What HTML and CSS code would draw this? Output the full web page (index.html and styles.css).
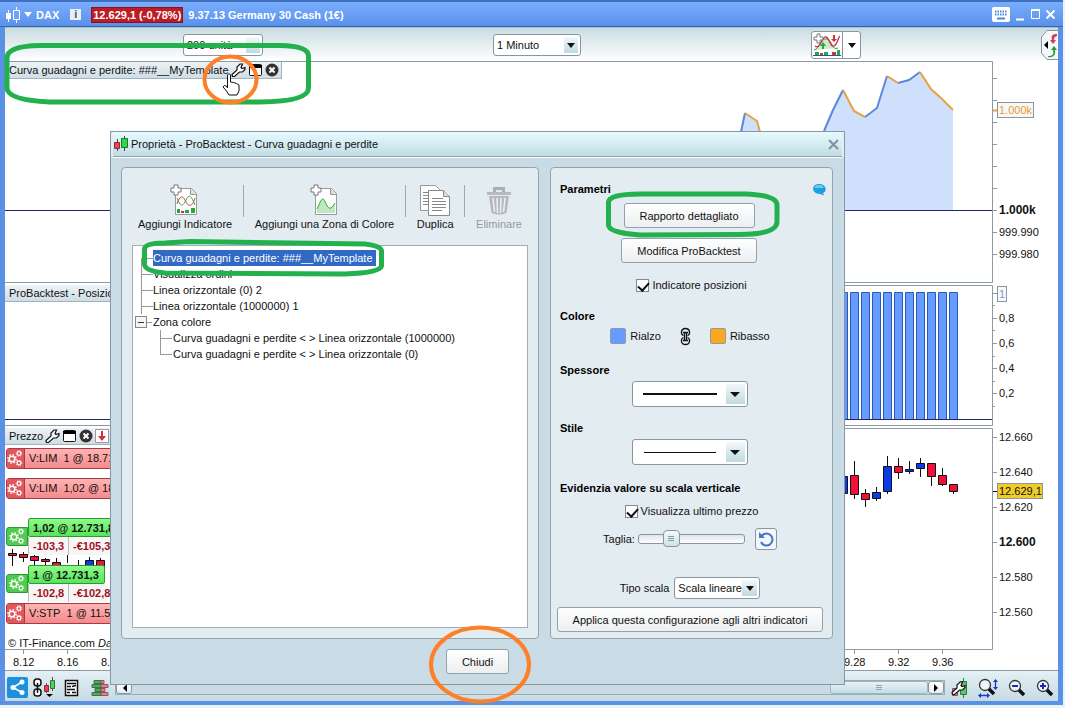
FILE: index.html
```
<!DOCTYPE html>
<html lang="it">
  <head>
    <title>DAX - Germany 30 Cash</title>
    <meta charset="utf-8">
    <link rel="stylesheet" href="styles.css">
  </head>
  <body>
    <svg class="defs" width="0" height="0">
      <defs>
        <g id="i-wrench"><path d="M1.500 13.500L1 11.500 6 7V4l3-3h2.500L10 4.500 11 5.500l3-1V6.500L11.500 9h-3l-5 4.500z" fill="#fff" stroke="#111" stroke-width="1.200"/></g>
        <g id="i-window"><rect x="1.500" y="1.500" width="12" height="11" rx="1" fill="#fff" stroke="#111"/><path d="M1 2h13v3H1z"/></g>
        <g id="i-close"><circle cx="7" cy="7" r="6.500" fill="#333"/><path d="M4.500 4.500l5 5M9.500 4.500l-5 5" stroke="#fff" stroke-width="2"/></g>
        <g id="i-gears" fill="none" stroke="#fff">
          <circle cx="5" cy="9" r="2.800" stroke-width="1.500"/><circle cx="5" cy="9" r="4.200" stroke-width="1.500" stroke-dasharray="1.500 1.800"/>
          <circle cx="12" cy="3.500" r="1.800" stroke-width="1.200"/><circle cx="12" cy="3.500" r="2.800" stroke-dasharray="1 1.200"/>
          <circle cx="12" cy="13" r="1.800" stroke-width="1.200"/><circle cx="12" cy="13" r="2.800" stroke-dasharray="1 1.200"/>
        </g>
        <g id="i-lens"><path d="M10 10l6 6" stroke="#111" stroke-width="3.500"/><circle cx="7" cy="7" r="5.500" fill="#eef4f8" stroke="#333" stroke-width="1.300"/></g>
      </defs>
    </svg>

    <main class="app">
      <header class="titlebar">
        <svg class="logo" width="16" height="18"><path d="M3.500 4v12M11.500 1v16" stroke="#fff"/><path d="M1 7h5v6H1z" fill="#fff"/><path d="M8.500 4.500h6v9h-6z" fill="#6ea3f8" stroke="#fff"/></svg>
        <svg width="8" height="5"><path d="M0 0h8L4 5z" fill="#fff"/></svg>
        <h1>DAX</h1>
        <span class="info">i</span>
        <span class="quote">12.629,1 (-0,78%)</span>
        <span class="instrument">9.37.13 Germany 30 Cash (1€)</span>
        <div class="window-buttons">
          <button aria-label="Tastiera"><svg width="18" height="15"><rect width="18" height="15" rx="2" fill="#fff"/><path d="M3 4.500h12M3 7.500h12" stroke="#4d83dc" stroke-width="2" stroke-dasharray="1.500 1"/><path d="M5 11.500h8" stroke="#4d83dc" stroke-width="2"/></svg></button>
          <button aria-label="Riduci"><svg width="9" height="12"><path d="M0 10.500h8" stroke="#fff" stroke-width="2"/></svg></button>
          <button aria-label="Ingrandisci"><svg width="9" height="12"><path d="M.5 1.500h8v8h-8z" fill="none" stroke="#fff"/><path d="M0 1h9" stroke="#fff" stroke-width="2"/></svg></button>
          <button aria-label="Chiudi finestra"><svg width="9" height="12"><path d="M.5 1.500l8 8M8.500 1.500l-8 8" stroke="#fff" stroke-width="2"/></svg></button>
        </div>
      </header>

      <div class="toolbar">
        <span class="combo units"><select aria-label="Unità"><option>200 unità</option></select></span>
        <span class="combo period"><select aria-label="Periodo"><option>1 Minuto</option></select></span>
        <button class="add-indicator" aria-label="Aggiungi indicatore">
          <svg width="30" height="25">
            <path d="M2 18C8 17 9 5 15 7s5 12 11 9" fill="#cfe8cf" stroke="#3a9a4a"/>
            <path d="M3 14c5 4 7-10 11-9s4 11 8 9 4-9 6-10" fill="none" stroke="#d03048" stroke-width="1.300"/>
            <path d="M5 2h3v3h3v3H8v3H5V8H2V5h3z" fill="#fff" stroke="#777"/>
            <path d="M10 17v-3H8l3-4 3 4h-2v3z" fill="#28a838"/>
            <path d="M21 3h2v4h2l-3 3-3-3h2z" fill="#d03048"/>
            <path d="M3 20h4v3H3zM12 20h4v3h-4zM25 18h3v5h-3z" fill="#28a838"/><path d="M8 21h3v2H8zM20 20h4v3h-4z" fill="#d03048"/>
            <path d="M1 23.500h28" stroke="#1c5c90"/>
          </svg>
          <span class="arrow"></span>
        </button>
        <button class="side-tab" aria-label="Ordini">
          <svg width="17" height="30"><path d="M17 .5H6L.5 7v16L6 29.500h11" fill="#f4f8f9" stroke="#8796a2"/><path d="M7 11v8l-4-4z"/><path d="M16 4c-5 0-6 2-5 6H9l3 4 3-4h-2c0-2 0-3 3-4z" fill="#d93a4e"/><path d="M7 26c5 0 6-2 5-6h-2l3-4 3 4h-2c1 5-2 8-7 7z" fill="#2b9a3c"/></svg>
        </button>
      </div>

      <section class="panel equity">
        <svg class="plot" viewBox="5 61 1053 223" preserveAspectRatio="xMaxYMin slice">
          <path class="frame" d="M5 61.500H992.500V282.500H5"/>
          <path class="area" d="M741 210V132L745 113 757 121 760 132V210ZM824 210V131L833 110 843 90 854 111 865 117 877 108 887 76 898 83 909 80 920 72 931 89 942 99 953 110V210Z"/>
          <path class="up" d="M741 132L745 113M824 131L833 110 843 90M865 117L877 108 887 76M898 83L909 80 920 72"/>
          <path class="down" d="M745 113L757 121 760 132M843 90L854 111 865 117M887 76L898 83M920 72L931 89 942 99 953 110"/>
          <path class="base" d="M5 210.500H992"/>
          <path class="frame" d="M993 78.500h4M993 100.500h4M993 122.500h4M993 144.500h4M993 166.500h4M993 188.500h4M993 210.500h4M993 232.500h4M993 254.500h4"/>
          <path class="down" d="M993 110.500h4"/>
          <rect class="tag" x="997.500" y="102.500" width="36" height="15"/>
          <text class="tag-orange" x="999" y="114">1.000k</text>
          <text class="major" x="999" y="214">1.000k</text>
          <text x="999" y="236">999.990</text>
          <text x="999" y="258">999.980</text>
        </svg>
        <div class="panel-title">
          Curva guadagni e perdite: ###__MyTemplate
          <svg width="15" height="15"><use href="#i-wrench"/></svg>
          <svg width="15" height="14"><use href="#i-window"/></svg>
          <svg width="14" height="14"><use href="#i-close"/></svg>
        </div>
      </section>

      <section class="panel positions">
        <svg class="plot" viewBox="5 284 1053 143" preserveAspectRatio="xMaxYMin slice">
          <path class="frame" d="M5 285.500H992.500V425.500H5"/>
          <path class="bars" d="M839.500 292.500h8v127h-8zM850.500 292.500h8v127h-8zM861.500 292.500h8v127h-8zM872.500 292.500h8v127h-8zM883.500 292.500h8v127h-8zM894.500 292.500h8v127h-8zM905.500 292.500h8v127h-8zM916.500 292.500h8v127h-8zM927.500 292.500h8v127h-8zM938.500 292.500h8v127h-8zM949.500 292.500h8v127h-8z"/>
          <path class="base" d="M5 419.500H992"/>
          <path class="frame" d="M993 293.500h4M993 305.500h2M993 318.500h4M993 330.500h2M993 343.500h4M993 356.500h2M993 368.500h4M993 381.500h2M993 393.500h4M993 406.500h2"/>
          <rect class="tag" x="997.500" y="286.500" width="9" height="15"/>
          <text class="tag-blue" x="999" y="298">1</text>
          <text x="999" y="322">0,8</text>
          <text x="999" y="347">0,6</text>
          <text x="999" y="372">0,4</text>
          <text x="999" y="397">0,2</text>
        </svg>
        <div class="panel-title">ProBacktest - Posizioni</div>
      </section>

      <section class="panel price">
        <svg class="plot" viewBox="5 427 1053 244" preserveAspectRatio="xMaxYMin slice">
          <path class="frame" d="M5 428.500H992.500V649.500H5M5 670.500H1058"/>
          <path class="wick" d="M854.500 461v38M865.500 489v18M876.500 487v14M887.500 456v38M898.500 458v21M909.500 461v13M920.500 458v19M931.500 463v23M942.500 468v18M953.500 484v10"/>
          <path class="rise" d="M839.500 476.500h8v17h-8zM872.500 492.500h8v6h-8zM883.500 466.500h8v25h-8zM905.500 469.500h8v2h-8zM916.500 463.500h8v5h-8z"/>
          <path class="fall" d="M850.500 475.500h8v19h-8zM861.500 493.500h8v6h-8zM894.500 466.500h8v6h-8zM927.500 463.500h8v13h-8zM938.500 475.500h8v9h-8zM949.500 484.500h8v7h-8z"/>
          <path class="wick" d="M12.500 549v17M23.500 552v10M34.500 552v16M45.500 558v10M56.500 558v12M67.500 555v8M78.500 560v8M89.500 557v10M100.500 558v10"/>
          <path class="fall" d="M8.500 553.500h8v2h-8zM19.500 554.500h8v3h-8zM30.500 556.500h8v4h-8zM41.500 559.500h8v2h-8zM52.500 562.500h8v4h-8zM96.500 560.500h8v6h-8z"/>
          <path class="rise" d="M85.500 560.500h8v6h-8z"/>
          <path class="frame" d="M993 437.500h4M993 472.500h4M993 507.500h4M993 542.500h4M993 577.500h4M993 612.500h4M23.500 650v4M67.500 650v4M854.500 650v4M898.500 650v4M942.500 650v4"/>
          <path class="wick" d="M993 491.500h4"/>
          <rect class="last" x="997.500" y="483.500" width="45" height="15"/>
          <text x="999" y="441">12.660</text>
          <text x="999" y="476">12.640</text>
          <text x="999" y="495">12.629,1</text>
          <text x="999" y="511">12.620</text>
          <text class="major" x="999" y="546">12.600</text>
          <text x="999" y="581">12.580</text>
          <text x="999" y="616">12.560</text>
          <text x="8" y="647">© IT-Finance.com <tspan class="italic">Dati</tspan></text>
          <text x="13" y="666">8.12</text>
          <text x="57" y="666">8.16</text>
          <text x="101" y="666">8.20</text>
          <text x="844" y="666">9.28</text>
          <text x="888" y="666">9.32</text>
          <text x="932" y="666">9.36</text>
        </svg>
        <div class="panel-title">
          Prezzo
          <svg width="15" height="15"><use href="#i-wrench"/></svg>
          <svg width="15" height="14"><use href="#i-window"/></svg>
          <svg width="14" height="14"><use href="#i-close"/></svg>
          <svg width="14" height="14"><path d="M.5.5h13v13H.5z" fill="#fff" stroke="#99a"/><path d="M6 2h2v5h3l-4 5-4-5h3z" fill="#d92b3d"/></svg>
        </div>
        <div class="order sell lim-1"><svg width="16" height="17"><use href="#i-gears"/></svg><span>V:LIM&nbsp; 1 @ 18.711</span></div>
        <div class="order sell lim-2"><svg width="16" height="17"><use href="#i-gears"/></svg><span>V:LIM&nbsp; 1,02 @ 18.7</span></div>
        <div class="trade trade-1">
          <div class="gear"><svg width="16" height="17"><use href="#i-gears"/></svg></div>
          <div><div class="size">1,02 @ 12.731,8</div><div class="result"><span>-103,3</span><span>-€105,3</span></div></div>
        </div>
        <div class="trade trade-2">
          <div class="gear"><svg width="16" height="17"><use href="#i-gears"/></svg></div>
          <div><div class="size">1 @ 12.731,3</div><div class="result"><span>-102,8</span><span>-€102,8</span></div></div>
        </div>
        <div class="order sell stp"><svg width="16" height="17"><use href="#i-gears"/></svg><span>V:STP&nbsp; 1 @ 11.531</span></div>
      </section>

      <footer class="statusbar">
        <button class="share" aria-label="Condividi"><svg width="21" height="21"><path d="M15 5L6 10.500l9 5" fill="none" stroke="#fff" stroke-width="1.500"/><circle cx="15" cy="5" r="2.500" fill="#fff"/><circle cx="6" cy="10.500" r="2.500" fill="#fff"/><circle cx="15" cy="15.500" r="2.500" fill="#fff"/></svg></button>
        <button aria-label="Collega"><svg width="25" height="22"><g fill="#fff" stroke="#111" stroke-width="1.500"><rect x="1" y="2" width="7" height="7" rx="3"/><rect x="1" y="12" width="7" height="7" rx="3"/><path d="M4.500 6v10"/></g><path d="M13.500 6v10M19.500 0v14" stroke="#555"/><path d="M11.500 8.500h4v6h-4z" fill="#e0415a" stroke="#a02030"/><path d="M17.500 3.500h4v8h-4z" fill="#4fcf5c" stroke="#208030"/><path d="M13 17h7l-3.500 3z"/></svg></button>
        <button aria-label="Rapporto"><svg width="22" height="18"><path d="M2.500 1.500h12v15h-12z" fill="#fff" stroke="#111" stroke-width="1.500"/><path d="M4 4.500h9M4 7.500h4M9 7.500l4-1M4 10.500h8M4 13.500h3M9 13.500h4" stroke="#111" stroke-width="1.500"/></svg></button>
        <button aria-label="Book"><svg width="20" height="18"><path d="M4 1.500h7v3H4zM2 5.500h9v3H2zM5 9.500h6v3H5zM2 13.500h9v3H2z" fill="#3fb550" stroke="#4a6a50"/><path d="M11 1.500h3v3h-3zM11 5.500h7v3h-7zM11 9.500h4v3h-4zM11 13.500h7v3h-7z" fill="#e88088" stroke="#8a5a5c"/></svg></button>
        <div class="scrollbar">
          <button class="scroll-arrow" aria-label="Sinistra"><svg width="5" height="8"><path d="M5 0v8L1 4z"/></svg></button>
          <div class="scroll-track"><div class="scroll-thumb"><svg width="6" height="6"><path d="M0 .5h6M0 2.500h6M0 4.500h6" stroke="#90a5b5"/></svg></div></div>
          <button class="scroll-arrow" aria-label="Destra"><svg width="5" height="8"><path d="M0 0v8l4-4z"/></svg></button>
        </div>
        <div class="tools">
          <button aria-label="Impostazioni"><svg width="17" height="20"><path d="M12.500 0v20" stroke="#2b7a35"/><path d="M9.500 3.500h6v13h-6z" fill="#5cc766" stroke="#2b7a35"/><path d="M1.500 10.500h5v7h-5z" fill="#c98a88" stroke="#855"/><use href="#i-wrench" y="3"/></svg></button>
          <button aria-label="Adatta"><svg width="20" height="20"><use href="#i-lens"/><path d="M17.500 3v7M2 17.500h8" stroke="#1a34d0" stroke-width="1.300"/><path d="M15 4h5l-2.500-3zM15 9h5l-2.500 3zM3 15v5l-3-2.500zM9 15v5l3-2.500z" fill="#1a34d0"/></svg></button>
          <button aria-label="Riduci zoom"><svg width="18" height="18"><use href="#i-lens"/><path d="M4 7h6" stroke="#1a2ac0" stroke-width="2"/></svg></button>
          <button aria-label="Aumenta zoom"><svg width="18" height="18"><use href="#i-lens"/><path d="M4 7h6M7 4v6" stroke="#1a2ac0" stroke-width="2"/></svg></button>
        </div>
      </footer>
    </main>

    <div class="dialog" role="dialog" aria-labelledby="dialog-title">
      <header class="dialog-head">
        <svg width="16" height="16"><path d="M4.500 3v12M11.500 0v15" stroke="#444"/><path d="M1.500 6.500h5v6h-5z" fill="#e0485c" stroke="#a02436"/><path d="M8.500 2.500h6v9h-6z" fill="#35d44a" stroke="#1c7a28"/></svg>
        <h2 id="dialog-title">Proprietà - ProBacktest - Curva guadagni e perdite</h2>
        <button class="dialog-close" aria-label="Chiudi finestra"><svg width="11" height="11"><path d="M1 1l9 9M10 1l-9 9" stroke="#80929d" stroke-width="2"/></svg></button>
      </header>

      <div class="dialog-body">
        <section class="box elements">
          <div class="actions">
            <button>
              <svg width="32" height="32">
                <path d="M6.500 4.500h16l5 5v21h-21z" fill="#fff" stroke="#999"/><path d="M21.500 4.500v6h6" fill="#ddd" stroke="#999"/>
                <path d="M8 20c4-12 7-6 9-2s6 6 9-4" fill="none" stroke="#d03048"/><path d="M8 14c4 10 6 8 9 2s5-5 9 5" fill="none" stroke="#28a838"/>
                <path d="M8 25h3v4H8zM16 26h4v3h-4zM22 24h4v5h-4z" fill="#28a838"/><path d="M12 27h3v2h-3z" fill="#d03048"/>
                <path d="M5 1h4v3h3v4H9v3H5V8H2V4h3z" fill="#fff" stroke="#777"/>
              </svg>
              Aggiungi Indicatore
            </button>
            <hr>
            <button>
              <svg width="32" height="32">
                <path d="M6.500 4.500h16l5 5v21h-21z" fill="#fff" stroke="#999"/><path d="M21.500 4.500v6h6" fill="#ddd" stroke="#999"/>
                <path d="M8 25c3-6 4-10 6-10s4 11 8 9c2-1 3-4 4-5v10H8z" fill="#bfe8bf"/><path d="M8 25c3-6 4-10 6-10s4 11 8 9c2-1 3-4 4-5" fill="none" stroke="#28a838"/>
                <path d="M5 1h4v3h3v4H9v3H5V8H2V4h3z" fill="#fff" stroke="#777"/>
              </svg>
              Aggiungi una Zona di Colore
            </button>
            <hr>
            <button>
              <svg width="32" height="32">
                <path d="M1.500 1.500h15l4 4v21h-19z" fill="#fff" stroke="#999"/><path d="M4 8.500h6M4 11.500h6M4 14.500h6M4 17.500h6M4 20.500h6" stroke="#888"/>
                <path d="M9.500 6.500h15l6 6v19h-21z" fill="#fff" stroke="#888"/><path d="M24.500 6.500v6h6" fill="#ddd" stroke="#888"/>
                <path d="M13 14.500h11M13 17.500h14M13 20.500h14M13 23.500h14M13 26.500h10" stroke="#888"/>
              </svg>
              Duplica
            </button>
            <hr>
            <button disabled>
              <svg width="32" height="32">
                <path d="M11.500 8V4.500h9V8" fill="none" stroke="#a9b0b4" stroke-width="3"/><path d="M4 8h24v3H4z" fill="#b5babd"/>
                <path d="M6 12h20l-2.500 17q-7.500 3-15 0z" fill="#b4babe"/><path d="M10 14l1.500 14M14 14l.5 15M18 14l-.5 15M22 14l-1.500 14" stroke="#eef1f2" stroke-width="1.500"/>
              </svg>
              Eliminare
            </button>
          </div>

          <ul class="tree">
            <li><span class="selected">Curva guadagni e perdite: ###__MyTemplate</span></li>
            <li>Visualizza ordini</li>
            <li>Linea orizzontale (0) 2</li>
            <li>Linea orizzontale (1000000) 1</li>
            <li class="folder"><button class="toggle" aria-label="Comprimi"></button>Zona colore</li>
            <li class="child">Curva guadagni e perdite &lt; &gt; Linea orizzontale (1000000)</li>
            <li class="child">Curva guadagni e perdite &lt; &gt; Linea orizzontale (0)</li>
          </ul>
        </section>

        <section class="box settings">
          <div class="heading-row">
            <h3>Parametri</h3>
            <svg width="14" height="13"><path d="M7 1c8 0 8 8 4 9l1 2.500L8 11C-1 11-1 1 7 1z" fill="#1c9fe0"/><path d="M7 2c4 0 5 2 4 3H3c-1-1 0-3 4-3z" fill="#6cc8f2"/></svg>
          </div>
          <button class="btn report">Rapporto dettagliato</button>
          <button class="btn modify">Modifica ProBacktest</button>
          <label class="check"><input type="checkbox" checked>Indicatore posizioni</label>

          <h3>Colore</h3>
          <div class="colors">
            <button class="color"><span class="swatch blue"></span>Rialzo</button>
            <svg width="11" height="19"><g fill="none" stroke="#111" stroke-width="1.300"><path d="M3.500 8.500c-3-1-3-7 2-7s5 6 2 7M3.500 10.500c-3 1-3 7 2 7s5-6 2-7"/><path d="M3 5.500h5M3 13.500h5M4.500 5.500v8M6.500 5.500v8"/></g></svg>
            <button class="color"><span class="swatch orange"></span>Ribasso</button>
          </div>

          <h3>Spessore</h3>
          <span class="combo line thick"><select aria-label="Spessore"><option label=" "></option></select></span>

          <h3 class="style-title">Stile</h3>
          <span class="combo line"><select aria-label="Stile"><option label=" "></option></select></span>

          <h3>Evidenzia valore su scala verticale</h3>
          <label class="check last-price"><input type="checkbox" checked>Visualizza ultimo prezzo</label>
          <div class="size-row">
            <label for="size">Taglia:</label>
            <input id="size" type="range" min="0" max="100" value="27">
            <button class="reset" aria-label="Ripristina"><svg width="16" height="16"><path d="M4 4.500A6 6 0 1 1 3 11" fill="none" stroke="#4476c8" stroke-width="2"/><path d="M1 1v6h6z" fill="#4476c8"/></svg></button>
          </div>
          <div class="scale-row">
            <label for="scale">Tipo scala</label>
            <span class="combo scale"><select id="scale"><option>Scala lineare</option></select></span>
          </div>
          <button class="btn apply">Applica questa configurazione agli altri indicatori</button>
        </section>
      </div>
      <button class="btn close">Chiudi</button>
    </div>

    <svg class="marks" width="1065" height="708">
      <g fill="none" stroke="#22b14c" stroke-width="5">
        <path d="M40 45.500H280Q308.500 46 308.500 56V88Q308.500 101.500 260 102H50Q7 100 7 88V58Q7 46 40 45.500Z"/>
        <path d="M165 243L190 241.500 365 244Q381.500 246 381.500 251V266Q380 273 345 274L165 273Q144.500 271 144.500 264V249Q145 243 165 243Z"/>
        <path d="M640 194H745Q777 195 777 205V222Q777 234 740 234.500L640 235Q608.500 233 608.500 225V202Q609 194 640 194Z"/>
      </g>
      <g fill="none" stroke="#ff7f27" stroke-width="4">
        <ellipse cx="230.500" cy="79.500" rx="26" ry="23"/>
        <ellipse cx="480" cy="664.500" rx="49" ry="37"/>
      </g>
      <path d="M227.500 88V75q1.500-3 3 0v7l3 .5 3 1 2.500 1.500v6l-2 4h-8l-2.500-4-3.500-4q1-3 4-.5z" fill="#fff" stroke="#111"/>
    </svg>
  </body>
</html>
```

FILE: styles.css
```
:root {
  --line: #8796a2;
  --blue: #5b91e4;
  --text: #111;
}
* {
  box-sizing: border-box;
}
html, body {
  margin: 0;
  height: 100%;
  font: 11px/16px "Liberation Sans", Arial, sans-serif;
  color: var(--text);
  background: #e8f3fb;
}
body {
  position: relative;
  overflow: hidden;
}
button, select {
  font: inherit;
  color: inherit;
}
button {
  border: 0;
  padding: 0;
  background: none;
}
svg {
  display: block;
  flex: none;
}
.defs {
  position: absolute;
}
h1, h2, h3 {
  margin: 0;
  font-size: 11px;
}

/* main window */
.app {
  display: flex;
  flex-direction: column;
  height: calc(100% - 3px);
  margin-right: 2px;
  border: solid var(--blue);
  border-width: 0 5px 4px;
  box-shadow: inset 0 -1px #3e68b0;
  background: #fff;
}
.titlebar {
  display: flex;
  align-items: center;
  flex: none;
  height: 27px;
  margin: 0 -5px;
  padding: 1px 8px 0 5px;
  border-top: 2px solid #3f70c0;
  border-bottom: 1px solid #3762ac;
  background: linear-gradient(#79adfd, #5a91ea);
  color: #fff;
  font-weight: bold;
}
.logo {
  margin-right: 3px;
}
.titlebar h1 {
  margin: 0 11px 0 4px;
}
.info {
  width: 11px;
  height: 11px;
  margin-right: 10px;
  background: #e8eefa;
  color: #555;
  line-height: 11px;
  text-align: center;
}
.quote {
  padding: 0 1px;
  margin-right: 5px;
  border: 1px solid #8c1020;
  background: #bd1c24;
  line-height: 14px;
}
.window-buttons {
  display: flex;
  align-items: center;
  gap: 6px;
  margin-left: auto;
}
.toolbar {
  display: flex;
  align-items: center;
  flex: none;
  height: 34px;
  border-top: 1px solid #a8c0c8;
  background: linear-gradient(#c9dce1, #fff);
}
.combo {
  position: relative;
  display: inline-block;
  height: 22px;
}
.combo select {
  width: 100%;
  height: 100%;
  padding: 0 3px;
  border: 1px solid var(--line);
  border-radius: 3px;
  background: #fff;
  appearance: none;
}
.combo::before {
  content: "";
  position: absolute;
  top: 3px;
  right: 3px;
  bottom: 3px;
  width: 14px;
  background: linear-gradient(#f2f8f9, #bfd9e0);
}
.combo::after, .arrow::after {
  content: "";
  position: absolute;
  top: 50%;
  right: 6px;
  margin-top: -2px;
  border: solid transparent;
  border-width: 5px 4px 0;
  border-top-color: #111;
}
.arrow::after {
  right: 4px;
}
.units {
  width: 80px;
  margin-left: 178px;
}
.units::after {
  display: none;
}
.period {
  width: 88px;
  margin-left: 230px;
}
.add-indicator {
  display: flex;
  width: 50px;
  height: 28px;
  margin-left: 230px;
  border: 1px solid var(--line);
  border-radius: 3px;
  background: #fff;
}
.arrow {
  position: relative;
  align-self: stretch;
  flex: 1;
  border-left: 1px solid var(--line);
}
.side-tab {
  margin-left: auto;
}

/* charts */
.panel {
  position: relative;
  min-height: 0;
}
.equity {
  flex: 223 1 0;
}
.positions {
  flex: 143 1 0;
}
.price {
  flex: 244 1 0;
}
.plot {
  width: 100%;
  height: 100%;
  fill: none;
}
.plot text {
  fill: var(--text);
}
.plot .major {
  font-size: 12px;
  font-weight: bold;
}
.italic {
  font-style: italic;
}
.frame {
  stroke: #8d9aa3;
}
.area {
  fill: #cfe0fd;
}
.up {
  stroke: #5b87dd;
  stroke-width: 2;
}
.down {
  stroke: #e8a33d;
  stroke-width: 2;
}
.base {
  stroke: #24246e;
}
.bars {
  fill: #669cff;
  stroke: #2a58b8;
}
.tag {
  fill: #f7f7f5;
  stroke: var(--line);
}
.plot .tag-orange {
  fill: #ec9a35;
}
.plot .tag-blue {
  fill: #7c9ae0;
}
.last {
  fill: #f0cc28;
  stroke: var(--line);
}
.wick {
  stroke: #111;
}
.rise {
  fill: #0c3be8;
  stroke: #111;
}
.fall {
  fill: #f0103a;
  stroke: #111;
}
.panel-title {
  position: absolute;
  top: 1px;
  left: 0;
  display: flex;
  align-items: center;
  gap: 2px;
  height: 17px;
  padding: 0 2px 0 4px;
  border: 1px solid #a3b1bd;
  border-width: 0 1px 1px 0;
  background: linear-gradient(#edf3f6, #cfdde6);
  white-space: nowrap;
}

/* orders pinned on the price chart */
.order {
  position: absolute;
  left: 1px;
  display: flex;
  align-items: center;
  height: 21px;
  padding-right: 4px;
  border: 1px solid #a33c44;
  border-radius: 3px;
  background: linear-gradient(#ffb4b4, #f58a8c);
  white-space: nowrap;
}
.order span {
  padding-left: 4px;
  border-left: 1px solid #a33c44;
  line-height: 19px;
}
.order svg {
  width: 17px;
  height: 19px;
  padding: 1px 0;
  background: #e2565c;
}
.lim-1 {
  top: 21px;
}
.lim-2 {
  top: 51px;
}
.stp {
  top: 176px;
}
.trade {
  position: absolute;
  left: 1px;
  display: flex;
  font-weight: bold;
  white-space: nowrap;
}
.trade-1 {
  top: 91px;
}
.trade-2 {
  top: 138px;
}
.gear {
  width: 22px;
  height: 19px;
  margin-top: 9px;
  padding: 0 2px;
  border: 1px solid #2c9a30;
  border-radius: 3px 0 0 3px;
  background: #4fcb50;
}
.size {
  width: max-content;
  height: 19px;
  padding: 0 5px 0 4px;
  border: 1px solid #2c9a30;
  border-radius: 2px;
  background: linear-gradient(#8dfa88, #58e45a);
  line-height: 18px;
}
.result {
  display: flex;
  background: #f6f6f6;
  color: #a3101c;
  line-height: 18px;
}
.result span {
  width: 40px;
  padding-left: 4px;
  border-left: 1px solid #bbb;
}

/* bottom bar */
.statusbar {
  display: flex;
  align-items: center;
  flex: none;
  height: 30px;
  padding: 3px 4px 0 2px;
  background: linear-gradient(#e4f0f4, #c5dbe4);
}
.statusbar > button {
  margin-right: 5px;
}
.statusbar .share {
  border-radius: 2px;
  background: #1e8fdc;
}
.scrollbar {
  display: flex;
  flex: 1;
  height: 15px;
  border: 1px solid #9aabb7;
  background: #cbdbe4;
}
.scroll-arrow {
  display: flex;
  align-items: center;
  justify-content: center;
  width: 16px;
  border: 1px solid var(--line);
  border-radius: 3px;
  background: linear-gradient(#fff, #e6eff3);
}
.scroll-track {
  display: flex;
  flex: 1;
  justify-content: flex-end;
}
.scroll-thumb {
  display: flex;
  align-items: center;
  justify-content: center;
  width: 98px;
  border: 1px solid #a3b5c0;
  border-radius: 3px;
  background: linear-gradient(#e7f3f7, #c5dde6);
}
.tools {
  display: flex;
  align-items: center;
  gap: 10px;
  margin-left: 6px;
}

/* properties dialog */
.dialog {
  position: absolute;
  top: 131px;
  left: 110px;
  right: 220px;
  border: 1px solid var(--line);
  background: #c9dbe4;
}
.dialog-head {
  display: flex;
  align-items: center;
  gap: 2px;
  height: 25px;
  margin: 0 2px;
  border-bottom: 1px solid #8fa1ab;
  box-shadow: 0 1px #fff, 2px 0 #e0f0f4, -2px 0 #e0f0f4;
  background: linear-gradient(#e6fbff, #c2dce4);
}
.dialog-head h2 {
  font-weight: normal;
}
.dialog-close {
  margin: 0 3px 0 auto;
}
.dialog-body {
  display: flex;
  gap: 11px;
  padding: 10px 11px 10px 10px;
}
.box {
  border: 1px solid #93a4af;
  border-radius: 4px;
  background: #e3ecf1;
}
.elements {
  display: flex;
  flex: 1;
  flex-direction: column;
  padding: 16px 10px 10px;
}
.actions {
  display: flex;
  justify-content: space-between;
  margin-bottom: 13px;
  padding: 0 6px;
}
.actions button {
  display: flex;
  flex-direction: column;
  align-items: center;
}
.actions button:disabled {
  color: #999;
}
.actions hr {
  width: 1px;
  height: 32px;
  margin: 1px 0 0;
  border: 0;
  background: #9daab2;
}
.tree {
  flex: 1;
  margin: 0;
  padding: 4px 0 0 8px;
  border: 1px solid #a0adb6;
  background: #fff;
  list-style: none;
}
.tree li {
  display: flex;
  align-items: center;
  height: 16px;
}
.tree li::before {
  content: "";
  width: 12px;
  height: 16px;
  background: linear-gradient(#999, #999) 0 8px / 12px 1px no-repeat, linear-gradient(#999, #999) 0 0 / 1px 16px no-repeat;
}
.tree li:first-child::before {
  background-position: 0 8px, 0 8px;
}
.tree .folder {
  background: linear-gradient(#999, #999) 0 8px / 11px 1px no-repeat;
}
.tree .folder::before {
  display: none;
}
.tree .child {
  padding-left: 19px;
}
.tree .child::before {
  width: 13px;
}
.tree .child:last-child::before {
  background-size: 12px 1px, 1px 9px;
}
.toggle {
  width: 12px;
  height: 12px;
  margin-left: -6px;
  margin-right: 6px;
  border: 1px solid #888;
  background: linear-gradient(#333, #333) center / 6px 1px no-repeat, #f5f5f5;
}
.selected {
  padding-right: 3px;
  background: #316ac5;
  color: #fff;
}
.settings {
  display: flex;
  flex-direction: column;
  align-items: center;
  width: 283px;
  padding: 13px 6px 6px;
}
.settings h3 {
  align-self: stretch;
  margin: 15px 0 0 3px;
  color: #000;
}
.heading-row {
  display: flex;
  align-self: stretch;
  align-items: center;
  justify-content: space-between;
}
.settings .heading-row h3 {
  margin-top: 0;
}
.btn {
  height: 25px;
  border: 1px solid #93a1ab;
  border-radius: 3px;
  background: linear-gradient(#fff, #eceef0);
}
.report {
  width: 131px;
  margin: 6px 5px 0 0;
}
.modify {
  width: 136px;
  margin: 10px 5px 0 0;
}
.check {
  display: flex;
  align-items: center;
  gap: 3px;
  height: 16px;
  margin-top: 14px;
}
.last-price {
  margin-top: 7px;
}
.check input {
  width: 13px;
  height: 13px;
  margin: 0;
  border: 1px solid #7d8b95;
  background: #fff;
  appearance: none;
}
.check input:checked::after {
  content: "";
  display: block;
  width: 9px;
  height: 5px;
  margin: 2px 0 0 1px;
  border: solid #111;
  border-width: 0 0 2px 2px;
  transform: rotate(-48deg);
}
.colors {
  display: flex;
  align-items: center;
  gap: 19px;
  height: 22px;
  margin: 1px 3px 0 0;
}
.color {
  display: flex;
  align-items: center;
  gap: 4px;
}
.swatch {
  width: 16px;
  height: 16px;
  border: 1px solid #8d9ba8;
  border-radius: 2px;
}
.blue {
  background: #669cff;
}
.orange {
  background: #ffa620;
}
.line {
  width: 116px;
  height: 26px;
  margin: 3px 3px 0 0;
}
.line select {
  background: linear-gradient(#111, #111) 11px 12px / 72px 1px no-repeat, #fff;
}
.line.thick select {
  background-position: 10px 11px, 0 0;
  background-size: 74px 2px, auto;
}
.line::before {
  width: 19px;
}
.scale::before {
  width: 15px;
}
.line::after {
  right: 8px;
  border-width: 5px 5px 0;
}
.settings .style-title {
  margin-top: 13px;
}
.size-row {
  display: flex;
  align-items: center;
  height: 22px;
  margin: 9px 3px 0 0;
}
.size-row input {
  width: 107px;
  height: 17px;
  margin: 0 10px 0 3px;
  background: none;
  appearance: none;
}
.size-row input::-webkit-slider-runnable-track {
  height: 10px;
  border: 1px solid var(--line);
  border-radius: 3px;
  background: linear-gradient(#dfe5e8, #fff);
}
.size-row input::-webkit-slider-thumb {
  width: 17px;
  height: 17px;
  margin-top: -5px;
  border: 1px solid var(--line);
  border-radius: 4px;
  background: repeating-linear-gradient(#8799a3 0 1px, transparent 1px 2px) center / 6px 5px no-repeat, linear-gradient(#f2f9fa, #cfe2e8);
  appearance: none;
}
.reset {
  display: flex;
  align-items: center;
  justify-content: center;
  width: 22px;
  height: 22px;
  border: 1px solid var(--line);
  border-radius: 3px;
  background: #f4f7f9;
}
.scale-row {
  display: flex;
  align-items: center;
  gap: 5px;
  height: 22px;
  margin: 27px 3px 0 0;
}
.scale {
  width: 86px;
}
.apply {
  width: 266px;
  margin: 8px 3px 0 0;
}
.close {
  display: block;
  width: 63px;
  margin: 0 auto 10px;
}

/* hand-drawn highlights */
.marks {
  position: absolute;
  top: 0;
  left: 0;
  pointer-events: none;
}
```
